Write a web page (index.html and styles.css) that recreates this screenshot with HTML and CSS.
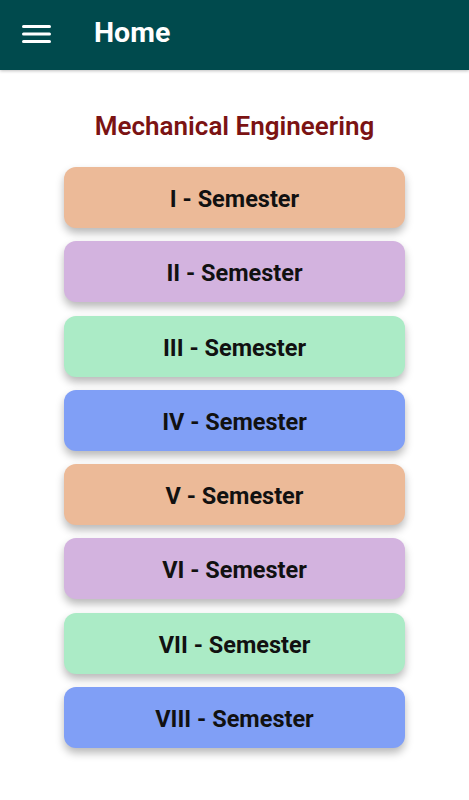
FILE: index.html
```html
<!DOCTYPE html>
<html lang="en">
<head>
  <meta charset="UTF-8">
  <meta name="viewport" content="width=device-width, initial-scale=1.0">
  <title>Home</title>
  <link rel="stylesheet" href="styles.css">
</head>
<body>
  <header class="appbar">
    <svg class="menu" width="30" height="22" viewBox="0 0 30 22">
      <rect x="0" y="2" width="29" height="3" rx="1.5" fill="#fff"/>
      <rect x="0" y="9.5" width="29" height="3" rx="1.5" fill="#fff"/>
      <rect x="0" y="17" width="29" height="3" rx="1.5" fill="#fff"/>
    </svg>
    <h1>Home</h1>
  </header>

  <main class="content">
    <h2 class="branch">Mechanical Engineering</h2>
    <div class="sems">
      <div class="sem peach">I - Semester</div>
      <div class="sem lilac">II - Semester</div>
      <div class="sem mint">III - Semester</div>
      <div class="sem blue">IV - Semester</div>
      <div class="sem peach">V - Semester</div>
      <div class="sem lilac">VI - Semester</div>
      <div class="sem mint">VII - Semester</div>
      <div class="sem blue">VIII - Semester</div>
    </div>
  </main>
</body>
</html>
```
FILE: styles.css
```css
* {
  margin: 0;
  padding: 0;
  box-sizing: border-box;
  font-family: Roboto, 'Liberation Sans', sans-serif;
}
body {
  background: #fff;
  width: 469px;
  height: 800px;
  overflow: hidden;
}
.appbar {
  height: 70px;
  background: #004a4d;
  display: flex;
  align-items: center;
  padding-left: 22px;
  box-shadow: 0 1px 3px rgba(0,0,0,0.25);
}
.menu {
  display: block;
  margin-top: -2px;
}
.appbar h1 {
  color: #fff;
  font-size: 28.5px;
  font-weight: 700;
  margin-left: 42px;
  margin-top: -6px;
}
.content {
  padding-top: 40px;
}
.branch {
  text-align: center;
  color: #7b1313;
  font-size: 26px;
  font-weight: 600;
  line-height: 32px;
}
.sems {
  display: flex;
  flex-direction: column;
  align-items: center;
  gap: 13.3px;
  margin-top: 25px;
}
.sem {
  width: 341px;
  height: 61px;
  border-radius: 12px;
  display: flex;
  align-items: center;
  justify-content: center;
  padding-top: 3px;
  font-size: 23.5px;
  font-weight: 700;
  color: #111;
  box-shadow: 0 5px 8px rgba(0,0,0,0.28);
}
.peach { background: #ecba98; }
.lilac { background: #d3b3df; }
.mint { background: #abebc6; }
.blue { background: #809ff6; }
```
